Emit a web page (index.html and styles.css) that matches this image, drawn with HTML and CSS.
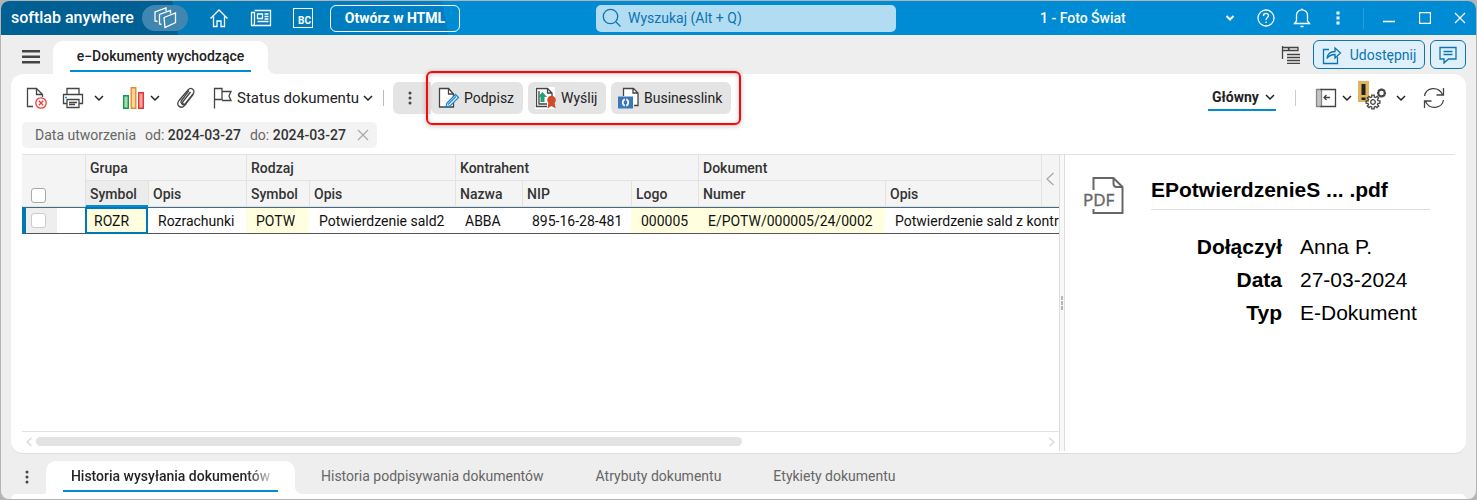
FILE: index.html
```html
<!DOCTYPE html>
<html lang="pl">
<head>
<meta charset="utf-8">
<meta name="viewport" content="width=device-width, initial-scale=1">
<title>softlab anywhere</title>
<link rel="stylesheet" href="styles.css">
</head>
<body>
<div class="window">
  <header class="titlebar">
    <div class="brand-area">
      <span class="brand">softlab anywhere</span>
      <button class="apps" aria-label="Aplikacje"><svg width="24" height="22" viewBox="0 0 24 22" class="ico light"><path d="M11 10.500 22.500 6v9.500L12 20.500zM8.500 17.500l-2-.5V7.500L17.500 3.500v3M4.500 14.500 2 14V5L13 1v3"/></svg></button>
      <button class="bare home" aria-label="Start"><svg width="20" height="20" viewBox="0 0 20 20" class="ico light"><path d="M1.500 10.500 10 2l8.500 8.500M4.500 8.500V18.500h3.500v-5.500h4v5.500h3.500V8.500"/></svg></button>
      <button class="bare news" aria-label="Aktualności"><svg width="22" height="18" viewBox="0 0 22 18" class="ico light"><path d="M4.500 1.500h16v15H1.500V3.500h3M4.500 3v10.500M4 16.500l.5-3M7.500 5h5v4.500h-5zM14.500 5h4M14.500 7.500h4M14.500 10h4M7.500 12.500h11"/></svg></button>
      <button class="bc" aria-label="Business Center">BC</button>
      <button class="html-button">Otwórz w HTML</button>
    </div>
    <label class="search">
      <svg width="20" height="20" viewBox="0 0 20 20" class="ico"><circle cx="8.500" cy="8.500" r="7.200"/><path d="m14 14 4.500 4.500"/></svg>
      <input type="search" placeholder="Wyszukaj (Alt + Q)" aria-label="Wyszukaj">
    </label>
    <div class="window-area">
      <button class="company">1 - Foto Świat <svg width="10" height="8" viewBox="0 0 10 8" class="ico light bold"><path d="m1.500 2 3.500 3.500L8.500 2"/></svg></button>
      <button class="cell" aria-label="Pomoc"><svg width="20" height="20" viewBox="0 0 20 20" class="ico light"><circle cx="10" cy="10" r="8"/><path d="M7.500 8c0-3.500 5-3.300 5-.5C12.500 9.500 10 9.500 10 12M10 13.500v1.500"/></svg></button>
      <button class="cell" aria-label="Powiadomienia"><svg width="18" height="22" viewBox="0 0 18 22" class="ico light"><path d="M1.500 16.500h15l-2-2.500V8.500C14.500 1 3.500 1 3.500 8.500V14zM9 3V1.500M7.500 19.500h3"/></svg></button>
      <button class="cell" aria-label="Więcej"><svg width="4" height="16" viewBox="0 0 4 16" class="dots"><path d="M.5 1.500h3v3h-3zM.5 6.500h3v3h-3zM.5 11.500h3v3h-3z"/></svg></button>
      <span class="title-sep"></span>
      <button class="cell" aria-label="Minimalizuj"><svg width="12" height="12" viewBox="0 0 12 12" class="ico light"><path d="M0 9.500h12"/></svg></button>
      <button class="cell" aria-label="Maksymalizuj"><svg width="12" height="12" viewBox="0 0 12 12" class="ico light"><path d="M.5.5h11v11H.5z"/></svg></button>
      <button class="cell" aria-label="Zamknij"><svg width="12" height="12" viewBox="0 0 12 12" class="ico light"><path d="m1 1 10 10M11 1 1 11"/></svg></button>
    </div>
  </header>

  <nav class="tabs">
    <button class="menu" aria-label="Menu"><svg width="18" height="14" viewBox="0 0 18 14"><path d="M0 0h18v2.500H0zM0 5.500h18v2.500H0zM0 11h18v2.500H0z" fill="#444"/></svg></button>
    <a class="tab current" href="#dokumenty"><span class="main-label">e−Dokumenty wychodzące</span></a>
    <div class="tab-actions">
      <button class="bare tree" aria-label="Lista"><svg width="20" height="18" viewBox="0 0 20 18" class="ico gray"><path d="M1.500 0v13M1.500 1.500h6v3h-6M8 1.500h9v3H8zM6 8.500h13M6 11.500h13M6 14.500h13M6 17.500h13"/></svg></button>
      <button class="outline share"><svg width="20" height="20" viewBox="0 0 20 20" class="ico"><path d="M7 4.500H1.500V18.500h14V12M5 13.500c.5-5 4-7 8-7V3l5.500 5-5.500 5V9.500c-3.500 0-6 1-8 4z"/></svg>Udostępnij</button>
      <button class="outline chat" aria-label="Komentarze"><svg width="18" height="18" viewBox="0 0 18 18" class="ico"><path d="M1 1.500h16v11.500H9.500L5 17v-4H1zM4.500 5.500h9M4.500 8.500h9"/></svg></button>
    </div>
  </nav>

  <main class="panel" id="dokumenty">
    <div class="toolbar">
      <button class="bare del" aria-label="Usuń"><svg width="22" height="22" viewBox="0 0 22 22" class="ico gray"><path d="M7 19.500H1.500v-18h9l6 6V10M10.500 1.500v6h6"/><circle cx="15" cy="16" r="5.200" stroke="#f03a3a" fill="#fff"/><path d="m12.800 13.800 4.400 4.400M17.200 13.800l-4.400 4.400" stroke="#f03a3a"/></svg></button>
      <button class="bare print" aria-label="Drukuj"><svg width="22" height="22" viewBox="0 0 22 22" class="ico gray"><path d="M5 7V1.500h12V7M5 16.500H1.500v-9h19v9H17M5 12.500h12v8H5zM7 15.500h8M7 17.500h6"/><path d="M3 10.500h2" stroke="#2898d8"/></svg></button>
      <button class="bare drop" aria-label="Opcje druku"><svg width="10" height="8" viewBox="0 0 10 8" class="ico dark"><path d="m1 2 4 4 4-4"/></svg></button>
      <button class="bare chart" aria-label="Wykres"><svg width="22" height="22" viewBox="0 0 22 22"><path d="M.7 8.700h4.600v12.600H.7z" fill="#a5dcb5" stroke="#119a4c" stroke-width="1.400"/><path d="M8.200.7h4.600v20.600H8.200z" fill="#fbd98b" stroke="#e38a3b" stroke-width="1.400"/><path d="M15.700 5.700h4.600v15.600h-4.600z" fill="#f6a3a3" stroke="#e03636" stroke-width="1.400"/></svg></button>
      <button class="bare drop2" aria-label="Opcje wykresu"><svg width="10" height="8" viewBox="0 0 10 8" class="ico dark"><path d="m1 2 4 4 4-4"/></svg></button>
      <button class="bare clip" aria-label="Załączniki"><svg width="20" height="22" viewBox="0 0 20 22" class="ico gray"><path d="M14.500 5 7 14.500c-1.500 2 1 3.700 2.500 2l7.500-9.500c3-4-2-7.500-5-4L3 13.500c-3.500 5 2 9 5.500 5l9-11.500"/><path d="M13 3.700 5.500 13.500c-2 2.700 2.500 6 4.500 3.300"/></svg></button>
      <button class="status"><svg width="20" height="22" viewBox="0 0 20 22" class="ico gray"><path d="M1.500 21.500V1.500H9v11H1.500M9 4.500h9l-2 4.500 2 4.500H9"/></svg>Status dokumentu<svg width="10" height="8" viewBox="0 0 10 8" class="ico dark arrow"><path d="m1 2 4 4 4-4"/></svg></button>
      <span class="sep short"></span>
      <button class="more" aria-label="Więcej opcji"><svg width="4" height="14" viewBox="0 0 4 14" class="gdots"><circle cx="2" cy="2" r="1.500"/><circle cx="2" cy="7" r="1.500"/><circle cx="2" cy="12" r="1.500"/></svg></button>
      <div class="marked">
        <button class="fill sign"><svg width="22" height="22" viewBox="0 0 22 22" class="ico gray"><path d="M1.500 1.500h9l5 5.500v13h-14z" fill="#fff"/><path d="M10.500 1.500V7h5"/><path d="m8 20 1-4 8.500-8.500 3 3L12 19z" stroke="#1c86cc" fill="#fff"/><path d="m10 17.500 8-8" stroke="#1c86cc"/></svg>Podpisz</button>
        <button class="fill send"><svg width="22" height="22" viewBox="0 0 22 22"><path fill="#fff" d="M0 0h20v22H0z"/><path d="M12 19.500H1.500V1.500h11L17 6v6M12.500 1.500V6H17M4 4v13h8" class="ico gray"/><path d="m7.500 5 4.500 5H9.500v5h-4v-5H3z" fill="#22a17a"/><circle cx="16.500" cy="13" r="4.300" fill="#d04b2c"/><path d="m13.500 15-1 6.500 4-2.500 4 2.500-1-6.500z" fill="#d04b2c"/></svg>Wyślij</button>
        <button class="fill link"><svg width="22" height="22" viewBox="0 0 22 22"><path d="M5.500 1h10L20 5.500V19H5.500z" fill="#fff"/><path d="M5.500 9V1.500h10L20 6v12.500h-4M15 1.500V6h5" class="ico gray"/><path fill="#3c78b8" d="M0 9.500h15v12H0z"/><path d="M6.800 11.500a4.200 4.200 0 0 0 0 8v-2a2.300 2.300 0 0 1 0-4zM8.200 11.500a4.200 4.200 0 0 1 0 8v-2a2.300 2.300 0 0 0 0-4z" fill="#fff"/></svg>Businesslink</button>
      </div>
      <div class="view-tools">
        <button class="view">Główny<svg width="10" height="8" viewBox="0 0 10 8" class="ico dark"><path d="m1 2 4 4 4-4"/></svg></button>
        <span class="sep vsep"></span>
        <button class="bare side" aria-label="Panel boczny"><svg width="22" height="20" viewBox="0 0 22 20" class="ico gray"><path d="M1.500 1.500h5v17h-5z" fill="#c4c4c4" stroke="#888"/><path d="M5.500 1.500h15v17h-15M15 9.500H9M11.500 7 9 9.500l2.500 2.500"/></svg></button>
        <button class="bare vdrop" aria-label="Opcje panelu"><svg width="10" height="8" viewBox="0 0 10 8" class="ico dark"><path d="m1 2 4 4 4-4"/></svg></button>
        <button class="bare gear" aria-label="Ustawienia"><svg width="30" height="34" viewBox="0 0 30 34" class="ico gray"><path d="M0 0h11v21H0z" fill="#e0b45a" stroke="none"/><path d="M3.500 3h4v11h-4zM3.500 16.500h4V19h-4z" fill="#222" stroke="none"/><g transform="translate(15 21)"><path id="cog" d="M5-1.300 6.900-1.200V1.200L5 1.300 4.500 2.700 5.700 4 4 5.700 2.700 4.500 1.300 5 1.200 6.900h-2.400L-1.300 5-2.700 4.500-4 5.700-5.700 4-4.500 2.700-5 1.300-6.900 1.200v-2.400L-5-1.300-4.500-2.700-5.700-4-4-5.700-2.700-4.500-1.300-5-1.200-6.900h2.400L1.300-5 2.700-4.500 4-5.700 5.700-4 4.500-2.700z"/><circle r="2.300"/></g><g transform="translate(23.500 12) scale(.55)"><use href="#cog" stroke-width="2.600"/></g></svg></button>
        <button class="bare gdrop" aria-label="Opcje ustawień"><svg width="10" height="8" viewBox="0 0 10 8" class="ico dark"><path d="m1 2 4 4 4-4"/></svg></button>
        <button class="bare" aria-label="Odśwież"><svg width="22" height="22" viewBox="0 0 22 22" class="ico gray"><path d="M1.500 9C3 .5 15-1.500 19.500 7.500M20.500 1v7h-7M20.500 13C19 21.500 7 23.500 2.500 14.500M1.500 21v-7h7"/></svg></button>
      </div>
    </div>

    <div class="filters">
      <div class="chip"><span>Data utworzenia</span><span>od: <b>2024-03-27</b></span><span>do: <b>2024-03-27</b></span><button class="bare" aria-label="Usuń filtr"><svg width="12" height="12" viewBox="0 0 12 12" class="ico pale"><path d="m1 1 10 10M11 1 1 11"/></svg></button></div>
    </div>

    <div class="content">
      <section class="list">
        <div class="grid-wrap">
          <table class="grid">
            <colgroup><col class="c-check"><col class="c-gap"><col class="c-symbol"><col class="c-gopis"><col class="c-symbol"><col class="c-ropis"><col class="c-name"><col class="c-nip"><col class="c-name"><col class="c-number"><col><col class="c-collapse"></colgroup>
            <thead>
              <tr>
                <th rowspan="2" colspan="2" class="check-head"><input type="checkbox" aria-label="Zaznacz wszystko"></th>
                <th colspan="2">Grupa</th><th colspan="2">Rodzaj</th><th colspan="3">Kontrahent</th><th colspan="2">Dokument</th>
                <th rowspan="2" class="collapse"><button class="bare" aria-label="Zwiń"><svg width="8" height="14" viewBox="0 0 8 14" class="ico pale"><path d="M7.500 1 1 7l6.500 6"/></svg></button></th>
              </tr>
              <tr><th class="sorted">Symbol</th><th>Opis</th><th>Symbol</th><th>Opis</th><th>Nazwa</th><th>NIP</th><th>Logo</th><th>Numer</th><th>Opis</th></tr>
            </thead>
            <tbody>
              <tr><td class="row-check"><input type="checkbox" aria-label="Zaznacz ROZR"></td><td></td><td class="key active">ROZR</td><td>Rozrachunki</td><td class="key">POTW</td><td>Potwierdzenie sald2</td><td>ABBA</td><td>895-16-28-481</td><td class="key">000005</td><td class="key">E/POTW/000005/24/0002</td><td colspan="2" class="last">Potwierdzenie sald z kontr</td></tr>
            </tbody>
          </table>
        </div>
        <div class="scroll"><svg width="8" height="10" viewBox="0 0 8 10" class="ico faint"><path d="M6.500 1 2 5l4.500 4"/></svg><div class="track"><div class="thumb"></div></div><svg width="8" height="10" viewBox="0 0 8 10" class="ico faint"><path d="M1.500 1 6 5 1.500 9"/></svg></div>
      </section>
      <div class="splitter"><svg width="3" height="14" viewBox="0 0 3 14"><path d="M0 0h2v4H0zM0 5h2v4H0zM0 10h2v4H0z" fill="#b5b5b5"/></svg></div>
      <aside class="preview">
        <svg width="42" height="42" viewBox="0 0 42 42" class="pdf"><path d="M10.500 15V3h20l9 9v26h-29v-4M30.500 3v5.500q0 3.500 3.500 3.500h5" fill="none" stroke="#666" stroke-width="2"/><text x="0" y="31">PDF</text></svg>
        <div class="details">
          <h2>EPotwierdzenieS ... .pdf</h2>
          <dl><dt>Dołączył</dt><dd>Anna P.</dd><dt>Data</dt><dd>27-03-2024</dd><dt>Typ</dt><dd>E-Dokument</dd></dl>
        </div>
      </aside>
    </div>
  </main>

  <nav class="bottom-tabs">
    <button class="bare" aria-label="Zakładki"><svg width="4" height="14" viewBox="0 0 4 14" class="gdots"><circle cx="2" cy="2" r="1.500"/><circle cx="2" cy="7" r="1.500"/><circle cx="2" cy="12" r="1.500"/></svg></button>
    <a class="tab current" href="#wysylanie"><span class="bottom-label"><span class="fade">Historia wysyłania dokumentów</span></span></a>
    <a class="other first" href="#podpisy">Historia podpisywania dokumentów</a>
    <a class="other" href="#atrybuty">Atrybuty dokumentu</a>
    <a class="other" href="#etykiety">Etykiety dokumentu</a>
  </nav>
  <div class="next-panel"></div>
</div>
</body>
</html>
```
FILE: styles.css
```css
* { box-sizing: border-box; }
body {
  margin: 0;
  min-height: 100vh;
  display: flex;
  padding: 1px 1px 1px;
  background: #b4b4b4;
  font: 14px/20px Roboto, "Noto Sans", sans-serif;
  color: #222;
}
button {
  margin: 0;
  padding: 0;
  border: 0;
  background: none;
  color: inherit;
  font: inherit;
  white-space: nowrap;
}
a { color: inherit; text-decoration: none; }
svg { flex: none; display: block; }
input { margin: 0; }
.ico { fill: none; stroke: currentColor; stroke-width: 1.3; }
.light { stroke: #fff; }
.bold { stroke-width: 2; }
.gray { stroke: #444; }
.dark { stroke: #222; stroke-width: 1.5; }
.pale { stroke: #aaa; }
.faint { stroke: #d8d8d8; }
.dots { fill: #fff; }
.gdots { fill: #444; }

.window {
  flex: 1;
  min-width: 0;
  display: flex;
  flex-direction: column;
  overflow: hidden;
  border-radius: 8px;
  background: #eee;
}

/* Title bar */
.titlebar {
  height: 34px;
  display: grid;
  grid-template-columns: 595fr 300px 580fr;
  align-items: center;
  background: linear-gradient(80deg, #006093 174px, #007ab9 175px, #007fc2 440px, #008cd4 441px);
  color: #fff;
}
.brand-area, .window-area { display: flex; align-items: center; }
.brand { margin-left: 10px; width: 131px; font-size: 16px; font-weight: 500; white-space: nowrap; }
.apps {
  width: 46px;
  height: 26px;
  display: grid;
  place-items: center;
  border-radius: 13px;
  background: #3f86b0;
}
.home { margin-left: 21px; }
.news { margin-left: 21px; }
.bc {
  width: 20px;
  height: 20px;
  margin-left: 21px;
  padding: 5px 0 0 3px;
  border: 1px solid #fff;
  font-size: 10px;
  line-height: 12px;
  font-weight: 700;
}
.html-button {
  width: 130px;
  height: 27px;
  margin-left: 17px;
  border: 1px solid #fff;
  border-radius: 6px;
  font-size: 14px;
  font-weight: 700;
}
.search {
  height: 27px;
  display: flex;
  align-items: center;
  gap: 6px;
  padding-left: 6px;
  border-radius: 5px;
  background: #b2dcf2;
  color: #0a75b0;
}
.search input {
  flex: 1;
  min-width: 0;
  padding: 0;
  border: 0;
  outline: 0;
  background: none;
  font: inherit;
}
.search input::placeholder { color: #0a75b0; opacity: 1; }
.window-area { justify-content: flex-end; }
.company {
  width: 210px;
  padding: 0 13px 0 2px;
  display: flex;
  align-items: center;
  justify-content: space-between;
  font-weight: 500;
}
.cell { width: 36px; height: 33px; display: grid; place-items: center; }
.title-sep { width: 1px; height: 21px; margin: 0 7px; background: #2b9cd9; }
.cell:last-child { width: 33px; }

/* Tabs */
.tabs { height: 39px; display: flex; align-items: flex-end; }
.menu { height: 34px; width: 52px; padding-left: 21px; }
.tab {
  position: relative;
  height: 33px;
  padding: 0 17px;
  border-radius: 10px 10px 0 0;
  background: #fff;
  font-weight: 500;
}
.main-label, .bottom-label {
  display: block;
  padding: 5px 4px 4px;
  border-bottom: 2px solid #008cd4;
  text-align: center;
  white-space: nowrap;
}
.main-label { min-width: 181px; }
.bottom-label { min-width: 215px; }
.tab::after {
  content: "";
  position: absolute;
  left: 100%;
  bottom: 0;
  width: 8px;
  height: 8px;
  background: radial-gradient(circle at 100% 0, transparent 8px, #fff 8px);
}
.tab-actions { margin: 0 10px 5px auto; display: flex; align-items: center; gap: 5px; }
.tree { margin-right: 7px; }
.outline {
  height: 29px;
  display: flex;
  align-items: center;
  justify-content: center;
  gap: 8px;
  border: 1px solid #0a75b0;
  border-radius: 6px;
  background: #e0f0fa;
  color: #0a75b0;
}
.share { width: 112px; }
.chat { width: 36px; }

/* Main panel */
.panel {
  flex: 1;
  margin: 0 10px;
  padding: 8px 11px 2px;
  display: flex;
  flex-direction: column;
  border-bottom: 1px solid #ddd;
  border-radius: 12px;
  background: #fff;
}
.toolbar { height: 32px; display: flex; align-items: center; }
.del { margin-left: 4px; }
.print { margin-left: 14px; }
.drop { margin-left: 10px; }
.chart { margin-left: 19px; }
.drop2 { margin-left: 5px; }
.clip { margin-left: 16px; }
.status { width: 155px; margin-left: 17px; display: flex; align-items: center; gap: 4px; font-size: 15px; }
.arrow { margin-left: auto; margin-right: -1px; }
.sep { width: 1px; height: 16px; background: #bbb; }
.short { margin: 0 9px 0 15px; }
.more {
  width: 38px;
  height: 32px;
  display: grid;
  place-items: center start;
  padding-left: 15px;
  border-radius: 6px 0 0 6px;
  background: #e4e4e4;
}
.marked { position: relative; display: flex; gap: 5px; }
.marked::after {
  content: "";
  position: absolute;
  inset: -11px -10px -11px -5px;
  border: 2px solid #f80808;
  border-radius: 6px;
  box-shadow: 0 1px 5px #0004, inset 0 1px 5px #0003;
  pointer-events: none;
}
.fill {
  height: 32px;
  display: flex;
  align-items: center;
  gap: 4px;
  padding-left: 7px;
  border-radius: 6px;
  background: #e4e4e4;
}
.sign { width: 92px; }
.send { width: 78px; }
.link { width: 120px; }
.view-tools { margin-left: auto; margin-right: 10px; display: flex; align-items: center; }
.view {
  width: 68px;
  height: 26px;
  padding: 0 0 0 4px;
  display: flex;
  align-items: center;
  gap: 6px;
  border-bottom: 2px solid #008cd4;
  font-weight: 700;
}
.vsep { margin: 0 19px; background: #ccc; }
.vdrop { margin-left: 5px; }
.gear { margin-left: 6px; }
.gdrop { margin: 0 17px 0 8px; }

.filters { padding: 8px 0 6px; display: flex; }
.chip {
  width: 355px;
  height: 26px;
  padding: 0 8px 0 13px;
  display: flex;
  align-items: center;
  gap: 9px;
  border-radius: 5px;
  background: #f3f3f3;
  color: #666;
  white-space: nowrap;
}
.chip b { color: #333; font-weight: 500; }
.chip .bare { margin-left: auto; }

.content { flex: 1; min-height: 0; display: flex; border-top: 1px solid #e2e2e2; }
.list { flex: 1; min-width: 0; display: flex; flex-direction: column; }
.grid-wrap { flex: 1; overflow: hidden; }
.grid { width: 100%; table-layout: fixed; border-collapse: separate; border-spacing: 0; }
.c-check { width: 35px; }
.c-gap { width: 28px; }
.c-symbol { width: 63px; }
.c-gopis { width: 98px; }
.c-ropis { width: 146px; }
.c-name { width: 67px; }
.c-nip { width: 109px; }
.c-number { width: 187px; }
.c-collapse { width: 18px; }
.grid th {
  height: 26px;
  padding: 0 4px;
  border-left: 1px solid #e2e2e2;
  border-bottom: 1px solid #e2e2e2;
  background: #f4f4f4;
  color: #333;
  text-align: left;
  font-weight: 500;
}
.grid .check-head { padding: 0 0 3px 9px; border-left: 0; vertical-align: bottom; }
.grid .collapse { padding: 0 0 0 4px; }
.grid .sorted { border-bottom-color: #008cd4; box-shadow: inset 0 -1px #008cd4; background: #ececec; }
.grid input {
  appearance: none;
  display: block;
  width: 15px;
  height: 15px;
  border: 1px solid #aaa;
  border-radius: 3px;
  background: #fff;
}
.grid td {
  height: 27px;
  padding: 0 10px;
  overflow: hidden;
  border-top: 1px solid #456b80;
  border-bottom: 1px solid #555;
  color: #111;
  white-space: nowrap;
}
.grid .last { padding-right: 0; }
.grid .key { background: #ffffe0; }
.grid .active { border: 2px solid #0078b4; padding: 0 7px; }
.grid .row-check { padding: 0 0 0 5px; border-left: 4px solid #0078b4; background: #eee; }
.grid .row-check input { border-color: #ccc; }
.scroll {
  height: 20px;
  padding: 0 3px;
  display: flex;
  align-items: center;
  gap: 3px;
  border-top: 1px solid #e2e2e2;
}
.track { flex: 1; }
.thumb { width: 70%; height: 9px; border-radius: 5px; background: #e3e3e3; }
.splitter {
  width: 6px;
  display: grid;
  place-items: center;
  border-left: 1px solid #ddd;
  border-right: 1px solid #ddd;
  background: #f8f8f8;
}
.preview {
  width: 390px;
  padding: 20px 25px 0 18px;
  display: flex;
  gap: 26px;
  font: 21px/33px "Liberation Sans", Arial, sans-serif;
  color: #000;
}
.pdf text { font: 17px "Open Sans", sans-serif; fill: #666; stroke: #666; stroke-width: .4; }
.details { flex: 1; }
h2 { margin: 0 0 20px; height: 35px; border-bottom: 1px solid #ddd; font-size: 21px; line-height: 30px; white-space: nowrap; }
dl { margin: 0; display: grid; grid-template-columns: 131px 1fr; column-gap: 18px; }
dt { text-align: right; font-weight: 700; }
dd { margin: 0; white-space: nowrap; }

/* Bottom tabs */
.bottom-tabs { height: 40px; padding-left: 24px; display: flex; align-items: flex-end; }
.bottom-tabs .bare { height: 34px; width: 21px; }
.fade {
  background: linear-gradient(90deg, #222 88%, #ccc) text;
  color: transparent;
}
.other { height: 28px; margin-left: 52px; color: #666; white-space: nowrap; }
.first { margin-left: 26px; }
.next-panel { height: 5px; margin: 0 10px; border-radius: 8px 8px 0 0; background: #fff; }
```
